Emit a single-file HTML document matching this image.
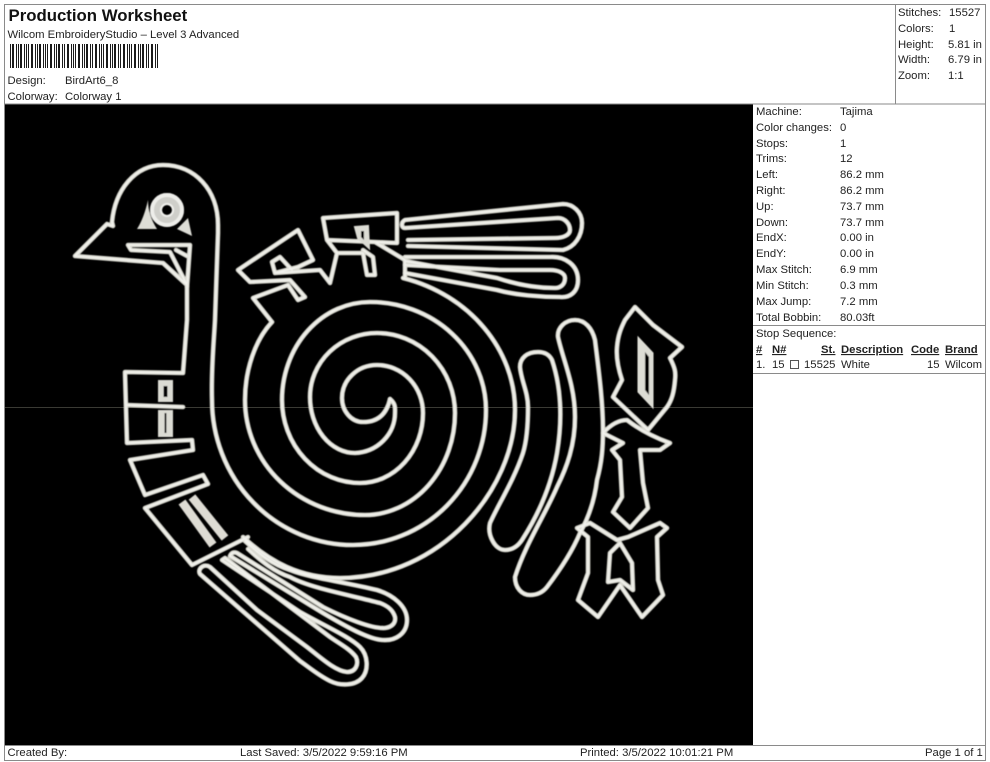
<!DOCTYPE html>
<html><head><meta charset="utf-8"><title>Production Worksheet</title>
<style>
html,body{margin:0;padding:0;background:#fff;width:990px;height:762px;overflow:hidden}
svg{display:block}
text{font-family:"Liberation Sans",Arial,sans-serif;font-size:11.3px;fill:#222}
.l{fill:none;stroke:#dcdcd3;stroke-width:4.6;stroke-linejoin:round;stroke-linecap:round}
.c{fill:none;stroke:#f3f3ee;stroke-width:1.6;stroke-linejoin:round;stroke-linecap:round}
</style></head><body>
<svg width="990" height="762" viewBox="0 0 990 762" xmlns="http://www.w3.org/2000/svg">
<defs>
<filter id="b" x="-5%" y="-5%" width="110%" height="110%"><feGaussianBlur stdDeviation="0.45"/></filter>
<g id="art">
<!-- neck, head, letters, spiral line 1 -->
<path d="M390,399 Q385,422 363,422 A21,24 0 0 1 342,398 A35,33 0 0 1 377,365 A46,48 0 0 1 423,413 A63,70 0 0 1 360,483 A78,83 0 0 1 282,400 A88,98 0 0 1 370,302 A116,108 0 0 1 486,410 A133,135 0 0 1 353,545 A141,145 0 0 1 212,400 C211,370 214,340 215,320 L218,233 L218,225 C218,190 195,165 163,165 C135,165 115,190 112,222 L113,226 L107,224 L75,256 L163,263 L187,285 L187,320 L184,360 L183,373 L125,372 L127,443 L192,440 L193,450 L130,460 L145,495 L203,475 L208,484 L145,508 L192,565 L248,537"/>
<path d="M127,405 L183,407"/>
<!-- mouth -->
<path d="M128,245 L190,245 L187,287 M128,245 L131,250 L170,252 L186,283 M176,250 L187,256"/>
<!-- spiral line 2 -->
<path d="M390,399 C396,404 395,408 395,413 A42,40 0 0 1 355,453 A45,56 0 0 1 310,397 A67,64 0 0 1 377,333 A78,80 0 0 1 455,413 A90,102 0 0 1 365,515 A120,115 0 0 1 245,400 C245,370 255,340 272,322"/>
<!-- outer arc to tail -->
<path d="M403,278 C470,295 515,350 515,410 C515,490 440,578 340,578 C300,578 270,562 243,537"/>
<!-- long loops -->
<path d="M538,352 C527,352 520,358 520,367 C521,380 528,392 528,407 C528,425 527,440 523,453 C514,480 498,505 490,523 C487,535 495,550 505,550 C513,550 518,546 522,540 C540,512 552,482 557,453 C560,435 561,420 560,403 C559,385 556,372 552,360 C549,354 544,352 538,352 Z"/>
<path d="M575,320 C565,320 557,328 558,337 C563,360 575,385 575,417 C575,445 567,467 557,487 C545,515 525,545 515,577 C515,588 522,595 530,595 C538,595 543,592 547,587 C560,570 572,552 580,533 C590,515 595,497 597,480 C602,462 603,447 603,430 C603,400 598,365 595,340 C592,328 585,320 575,320 Z"/>
<!-- D shape -->
<path d="M635,307 L653,325 L682,347 L670,358 C675,368 676,372 675,380 C674,392 672,400 667,407 L648,430 L613,397 L622,380 C618,368 616,358 617,347 C618,335 621,328 625,320 Z"/>
<!-- T shape -->
<path d="M603,433 Q615,420 627,420 Q645,434 670,443 L660,450 L640,450 L643,483 L648,508 L630,528 L613,512 L622,497 L620,460 L612,450 L623,443 Z"/>
<!-- W shape -->
<path d="M577,528 L590,523 L617,540 L628,537 L660,523 L667,528 L657,537 L658,580 L663,595 L642,617 L620,585 L598,617 L578,600 L588,573 L588,537 Z"/>
<path d="M608,582 L610,553 L620,543 L632,563 L633,590 L620,580 Z"/>
<!-- wing blocks -->
<path d="M323,218 L397,213 L397,243 L375,242 L405,260 L405,277 M375,242 L327,240 L323,218 M327,240 L337,253 L330,283 L320,270 L275,273 L272,262 L280,257 L292,270 M275,273 L298,267 L313,260 L298,230 L238,270 L250,282 L290,280 L305,297 L298,300 L288,285 L253,298 L272,322"/>
<path d="M337,253 L363,253 L367,275 L375,275 L373,257 L363,250"/>
<!-- upper feather -->
<path d="M408,246 L563,250 C575,247 582,236 582,223 C582,212 573,204 563,204 L405,220 C401,222 401,228 405,228 L558,218 C565,218 570,224 570,230 C570,235 563,238 555,238 L408,240"/>
<!-- lower feather -->
<path d="M405,257 L550,257 C565,256 578,265 578,280 C578,292 570,298 560,297 C540,297 515,295 497,290 L405,273"/>
<path d="M405,265 L500,270 L550,270 C558,270 565,273 565,278 C565,285 560,288 555,288 C535,288 515,284 497,278 L405,261"/>
<!-- tail feathers -->
<path d="M245,541 C258,553 273,565 290,570 C310,578 345,582 377,590 C393,595 407,606 407,620 C407,634 395,641 383,640 C370,640 345,626 323,613 L230,556 Q232,551 237,553 L323,607 C345,618 372,629 385,628 C392,627 396,623 395,617 C393,610 388,606 380,603 C350,595 310,588 290,577 C275,572 262,562 248,549"/>
<path d="M222,560 L300,612 C325,626 350,637 360,647 C368,655 369,670 362,678 C355,686 340,686 330,681 C318,675 310,668 300,661 L200,574 C197,569 204,563 210,567 L257,610 L307,647 C320,657 335,671 347,672 C356,672 359,664 356,657 C350,649 340,644 330,637 L225,558 Z"/>
</g>
</defs>
<rect width="990" height="762" fill="#fff"/>
<rect x="5" y="104" width="748" height="641" fill="#000"/>
<!-- frame lines -->
<path d="M4.5,4.5 H985.5 V760.5 H4.5 Z M895.5,5 V104 M5,104 H985 M753,325.5 H985 M753,373.5 H985 M5,745.5 H985" fill="none" stroke="#8a8a8a" stroke-width="1"/>
<rect x="5" y="407" width="748" height="1" fill="#3a3a34"/>
<!-- barcode -->
<path shape-rendering="crispEdges" d="M10.5,44V68M12.5,44V68M13.5,44V68M16.5,44V68M18.5,44V68M20.5,44V68M21.5,44V68M24.5,44V68M26.5,44V68M28.5,44V68M31.5,44V68M32.5,44V68M35.5,44V68M37.5,44V68M39.5,44V68M40.5,44V68M43.5,44V68M45.5,44V68M47.5,44V68M50.5,44V68M51.5,44V68M54.5,44V68M56.5,44V68M58.5,44V68M59.5,44V68M62.5,44V68M64.5,44V68M67.5,44V68M68.5,44V68M71.5,44V68M73.5,44V68M75.5,44V68M78.5,44V68M79.5,44V68M82.5,44V68M84.5,44V68M86.5,44V68M87.5,44V68M90.5,44V68M92.5,44V68M95.5,44V68M96.5,44V68M99.5,44V68M101.5,44V68M103.5,44V68M106.5,44V68M107.5,44V68M110.5,44V68M112.5,44V68M114.5,44V68M115.5,44V68M118.5,44V68M120.5,44V68M123.5,44V68M124.5,44V68M127.5,44V68M129.5,44V68M131.5,44V68M134.5,44V68M135.5,44V68M138.5,44V68M140.5,44V68M142.5,44V68M143.5,44V68M146.5,44V68M148.5,44V68M151.5,44V68M152.5,44V68M155.5,44V68M157.5,44V68" stroke="#1a1a1a" stroke-width="1"/>
<!-- header text -->
<text x="8.5" y="21" style="font-size:16.8px;font-weight:bold;fill:#111">Production Worksheet</text>
<text x="7.5" y="38">Wilcom EmbroideryStudio – Level 3 Advanced</text>
<text x="7.5" y="84">Design:</text><text x="65" y="84">BirdArt6_8</text>
<text x="7.5" y="100">Colorway:</text><text x="65" y="100">Colorway 1</text>
<text x="898" y="16">Stitches:</text><text x="949" y="16">15527</text>
<text x="898" y="32">Colors:</text><text x="949" y="32">1</text>
<text x="898" y="48">Height:</text><text x="948" y="48">5.81 in</text>
<text x="898" y="63">Width:</text><text x="948" y="63">6.79 in</text>
<text x="898" y="79">Zoom:</text><text x="948" y="79">1:1</text>
<!-- right panel -->
<text x="756" y="115">Machine:</text><text x="840" y="115">Tajima</text>
<text x="756" y="131">Color changes:</text><text x="840" y="131">0</text>
<text x="756" y="147">Stops:</text><text x="840" y="147">1</text>
<text x="756" y="162">Trims:</text><text x="840" y="162">12</text>
<text x="756" y="178">Left:</text><text x="840" y="178">86.2 mm</text>
<text x="756" y="194">Right:</text><text x="840" y="194">86.2 mm</text>
<text x="756" y="210">Up:</text><text x="840" y="210">73.7 mm</text>
<text x="756" y="226">Down:</text><text x="840" y="226">73.7 mm</text>
<text x="756" y="241">EndX:</text><text x="840" y="241">0.00 in</text>
<text x="756" y="257">EndY:</text><text x="840" y="257">0.00 in</text>
<text x="756" y="273">Max Stitch:</text><text x="840" y="273">6.9 mm</text>
<text x="756" y="289">Min Stitch:</text><text x="840" y="289">0.3 mm</text>
<text x="756" y="305">Max Jump:</text><text x="840" y="305">7.2 mm</text>
<text x="756" y="321">Total Bobbin:</text><text x="840" y="321">80.03ft</text>
<text x="756" y="337">Stop Sequence:</text>
<text x="756" y="353" style="font-weight:bold" text-decoration="underline">#</text>
<text x="772" y="353" style="font-weight:bold" text-decoration="underline">N#</text>
<text x="821" y="353" style="font-weight:bold" text-decoration="underline">St.</text>
<text x="841" y="353" style="font-weight:bold" text-decoration="underline">Description</text>
<text x="911" y="353" style="font-weight:bold" text-decoration="underline">Code</text>
<text x="945" y="353" style="font-weight:bold" text-decoration="underline">Brand</text>
<text x="756" y="368">1.</text><text x="772" y="368">15</text>
<rect x="790.5" y="360.5" width="8" height="8" fill="#fff" stroke="#555"/>
<text x="804" y="368">15525</text><text x="841" y="368">White</text><text x="927" y="368">15</text><text x="945" y="368">Wilcom</text>
<!-- footer -->
<text x="7.5" y="756">Created By:</text>
<text x="240" y="756">Last Saved: 3/5/2022 9:59:16 PM</text>
<text x="580" y="756">Printed: 3/5/2022 10:01:21 PM</text>
<text x="925" y="756">Page 1 of 1</text>
<!-- artwork -->
<svg x="0" y="0" width="990" height="745" viewBox="0 0 990 745">
<g filter="url(#b)">
<use href="#art" class="l"/>
<use href="#art" class="c"/>
<!-- eye -->
<circle cx="167" cy="210" r="11" fill="none" stroke="#cfcfca" stroke-width="12"/>
<circle cx="167" cy="210" r="15" fill="none" stroke="#eeeeea" stroke-width="4"/>
<circle cx="167" cy="210" r="6" fill="none" stroke="#f0f0ec" stroke-width="2"/>
<path d="M148,200 Q144,218 137,229 L157,229 Q148,215 148,200 Z M188,218 L177,229 L192,236 Z" fill="#ddddd6"/>
<!-- thick neck blocks -->
<rect x="158" y="380" width="15" height="22" fill="#dcdcd4"/><rect x="163.5" y="386" width="4" height="11" fill="#000"/>
<rect x="158" y="410" width="15" height="27" fill="#dcdcd4"/><rect x="164.5" y="413" width="2" height="20" fill="#000"/>
<path d="M182,502 L213,545 M192,497 L225,538" stroke="#dedcd4" stroke-width="8.5" fill="none"/>
<!-- wing slit -->
<path d="M355,227 L368,226 L369,248 L358,238 Z" fill="#dcdcd4" stroke="#dcdcd4" stroke-width="2"/>
<path d="M361,231 L364,231 L364,240 L361,237 Z" fill="#000"/>
<!-- D inner -->
<path d="M638,337 L653,353 L653,408 L638,392 Z" fill="#dcdcd4" stroke="#e2e2da" stroke-width="1"/>
<path d="M645,352 L649,357 L649,395 L645,390 Z" fill="#000"/>
</g>
</svg>
</svg>
</body></html>
